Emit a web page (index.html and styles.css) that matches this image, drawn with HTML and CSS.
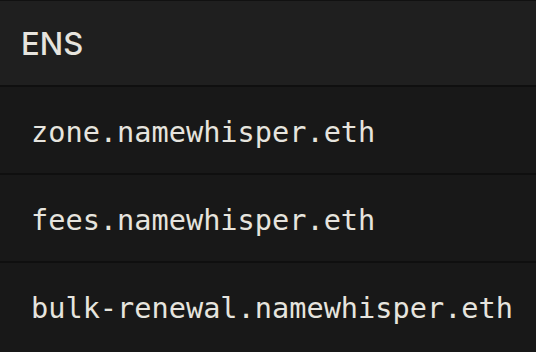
FILE: index.html
```html
<!DOCTYPE html>
<html lang="en">
<head>
    <meta charset="UTF-8">
    <meta name="viewport" content="width=device-width, initial-scale=1.0">
    <title>ENS</title>
    <link rel="stylesheet" href="styles.css">
</head>
<body>
    <div class="panel">
        <div class="head">ENS</div>
        <ul class="names">
            <li>zone.namewhisper.eth</li>
            <li>fees.namewhisper.eth</li>
            <li>bulk-renewal.namewhisper.eth</li>
        </ul>
    </div>
</body>
</html>
```

FILE: styles.css
```css
body{
    margin: 0;
    background-color: #181818;
    color: #e6e4de;
}
.panel{
    border-top: 1px solid #111;
}
.head{
    font-family: Inter, 'Noto Sans', sans-serif;
    font-size: 31px;
    font-weight: 500;
    background-color: #1f1f1f;
    height: 84px;
    display: flex;
    align-items: center;
    padding-left: 21px;
    border-bottom: 2px solid #0f0f0f;
}
.names{
    list-style: none;
    margin: 0;
    padding: 0;
}
.names li{
    font-family: 'DejaVu Sans Mono', 'Liberation Mono', monospace;
    font-size: 28.6px;
    height: 82px;
    padding-top: 4px;
    display: flex;
    align-items: center;
    padding-left: 31px;
    border-bottom: 2px solid #0f0f0f;
}
.names li:last-child{
    border-bottom: none;
}
```
